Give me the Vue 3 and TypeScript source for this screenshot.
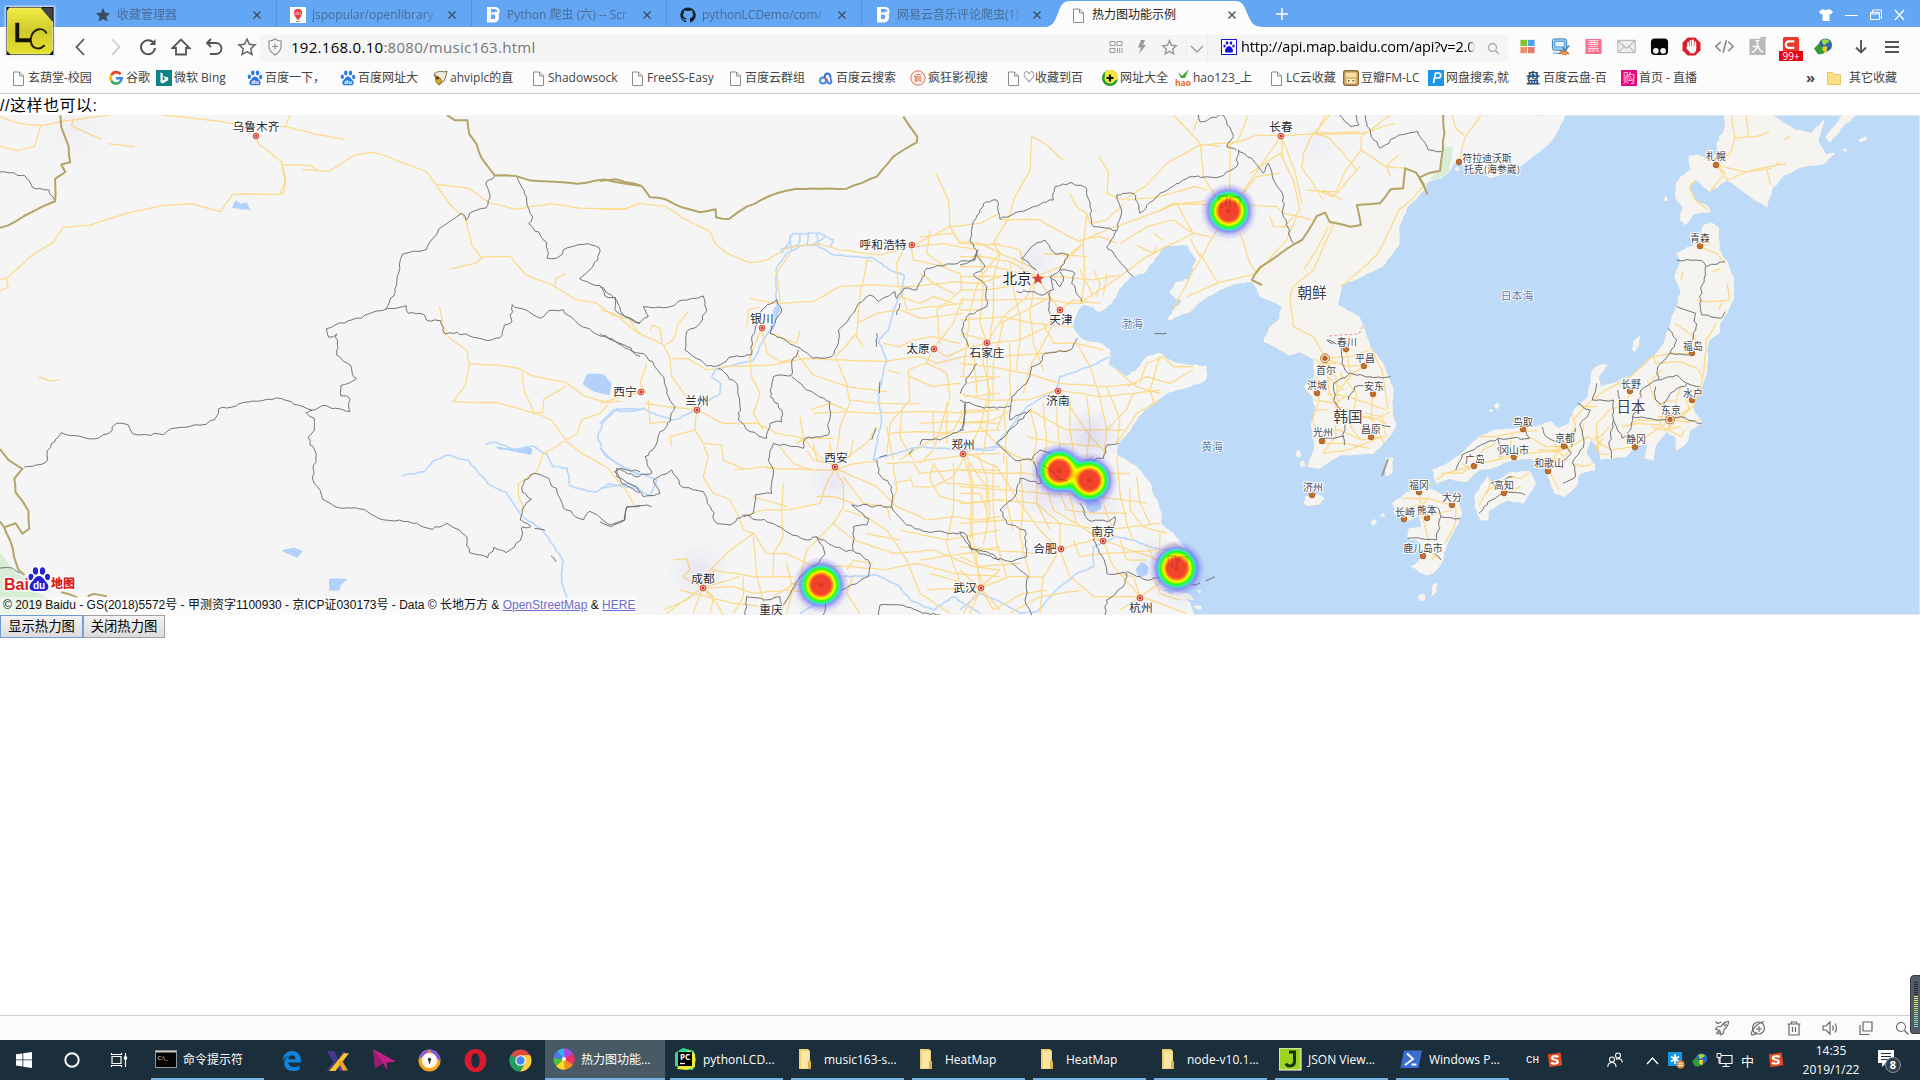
<script setup lang="ts">
type Region = 'a' | 'b' | 'c' | 'd'
type Kind = 'sea' | 'land' | 'warm' | 'green' | 'lake' | 'river' | 'road' | 'province' | 'nation' | 'dash'

// Each map sheet has its own survey grid; the transform places it on the shared canvas.
const sheets: Record<Region, string> = {
  a: 'translate(0 110) scale(.40816 .3444)',
  b: 'translate(600 110) scale(.33333)',
  c: 'translate(960 110) scale(.33333)',
  d: 'translate(1260 110) scale(.42088 .33333)',
}

const layers: { kind: Kind; sheet: Region; lines: string[] }[] = [
  { kind: 'sea', sheet: 'c', lines: [
    '875,515 820,520 770,545 720,575 690,605 625,630 640,600 665,575 630,550 645,520 685,510 710,450 680,405 620,405 590,440 550,490 510,500 475,540 455,580 415,605 400,590 365,585 345,620 338,650 350,670 370,690 430,705 450,720 445,765 500,800 540,770 560,740 600,730 650,760 740,770 735,810 690,830 620,850 570,885 540,915 500,970 475,1000 470,1035 530,1070 570,1120 600,1200 605,1245 640,1270 680,1320 705,1385 690,1430 600,1440 650,1455 690,1480 700,1515 2880,1515 2880,15 1000,15'] },
  { kind: 'land', sheet: 'd', lines: [
    '725,15 705,70 680,110 625,165 550,205 520,180 480,165 460,160 450,185 430,205 400,215 390,240 350,290 330,350 330,405 290,470 240,500 195,525 185,585 100,620 0,560 -20,515 -20,15'] },
  { kind: 'warm', sheet: 'd', lines: [
    '390,205 390,240 350,290 330,350 330,405 290,470 240,500 195,525 183,585 235,620 262,710 295,770 315,830 314,900 322,950 300,990 270,1030 190,1035 140,1075 115,1070 130,1010 122,950 132,900 125,860 105,830 130,800 128,745 95,725 70,735 10,695 20,660 45,630 55,570 35,545 0,540 -20,515 0,472 65,415 100,390 135,318 155,308 165,335 215,350 240,345 230,285 285,280 310,240 330,240 345,175',
    '1105,15 1103,60 1085,100 1085,130 1065,150 1040,135 1020,140 1025,180 1000,200 988,225 990,270 1005,290 998,330 1010,345 1030,310 1070,305 1065,290 1030,270 1020,230 1035,210 1070,245 1110,210 1160,255 1205,290 1215,240 1245,195 1290,170 1340,160 1365,130 1345,135 1325,95 1340,30 1310,70 1270,60 1220,15',
    '1355,95 1345,80 1370,40 1385,15 1415,15 1385,50',
    '1055,345 1070,338 1090,355 1090,420 1110,455 1125,510 1125,560 1110,610 1092,640 1090,670 1065,690 1062,780 1050,830 1030,870 1030,900 1050,940 1020,960 1015,995 990,1020 988,980 965,965 940,1005 935,1050 915,1045 920,1000 890,1010 870,1040 810,1048 805,1010 785,990 775,1030 795,1065 795,1080 760,1090 750,1130 725,1160 700,1150 685,1100 690,1070 670,1050 640,1045 600,1050 560,1070 520,1080 490,1115 450,1105 420,1120 410,1080 440,1065 480,1030 520,980 560,960 620,955 660,950 690,935 710,955 735,940 745,900 780,860 790,780 810,765 825,765 805,800 808,830 840,820 880,800 920,760 960,700 975,640 990,590 1000,540 985,500 1000,450 990,430 1025,410 1045,400 1050,360',
    '510,1160 540,1100 555,1130 590,1090 640,1085 655,1120 625,1180 590,1170 545,1200 540,1230 525,1230 510,1190',
    '315,1180 345,1150 380,1130 410,1140 440,1160 470,1170 480,1210 465,1250 445,1300 430,1360 410,1390 395,1395 360,1370 385,1345 385,1310 375,1290 350,1285 355,1255 385,1250 380,1215 345,1235 320,1210',
    '885,718 890,690 903,678 900,705 890,725', '105,1180 108,1160 140,1155 152,1165 140,1183 112,1187',
    '300,1045 316,1045 312,1090 300,1098', '408,1458 412,1425 421,1420 418,1445', '376,1458 390,1452 390,1470 380,1472',
    '1423,90 1440,80 1440,88 1428,96', '960,270 965,260 967,272', '1385,120 1392,116 1393,124', '557,886 563,878 569,888 562,896', '545,902 551,898 551,905',
    '264,1240 270,1228 277,1235 270,1246', '286,1218 293,1210 296,1218', '85,1030 92,1020 98,1035 90,1042', '95,1060 102,1052 108,1066 99,1072', '463,178 469,170 472,182'] },
  { kind: 'green', sheet: 'd', lines: ['437,110 458,112 455,150 448,185 425,205 400,208 428,182 436,140'] },
  { kind: 'green', sheet: 'a', lines: ['0,1285 12,1300 32,1340 60,1360 90,1400 150,1440 150,1465 0,1465'] },
  { kind: 'lake', sheet: 'a', lines: [
    '568,285 578,262 590,272 605,268 614,290 590,288', '1428,795 1440,765 1480,768 1498,795 1495,828 1455,818',
    '690,1280 720,1270 742,1280 728,1300 712,1292', '806,1365 808,1360 852,1362 835,1380 832,1395 806,1395',
    '1215,978 1270,985 1290,975 1305,985 1300,1002 1265,992 1220,984'] },
  { kind: 'lake', sheet: 'b', lines: ['520,600 535,580 540,600 520,660 508,670'] },
  { kind: 'lake', sheet: 'c', lines: ['528,1375 545,1355 565,1370 562,1395 540,1402 530,1390', '375,1175 395,1160 425,1175 425,1195 395,1210 380,1195'] },
  { kind: 'warm', sheet: 'c', lines: ['640,1445 690,1455 700,1470 660,1465', '712,1440 722,1442 720,1450', '700,1490 722,1488 724,1498'] },
  { kind: 'river', sheet: 'a', lines: [
    '985,1062 1040,1050 1060,1020 1095,1002 1150,1020 1195,1085 1240,1110 1280,1180 1330,1220 1380,1310 1375,1370 1388,1410 1390,1465',
    '1190,970 1215,965 1260,985 1305,975 1340,1000 1355,1035 1390,1040 1395,1090 1420,1100 1460,1110 1490,1085 1568,1100',
    '1568,870 1510,868 1475,910 1465,950 1480,1000 1530,1040 1568,1060'] },
  { kind: 'river', sheet: 'b', lines: [
    '0,940 40,900 90,905 130,895 160,910 215,930 240,925 300,890 360,850 362,820 335,800 345,780 400,765 460,750 485,700 510,660 530,600 528,480 560,430 600,408 650,405 700,435 760,440 820,445 870,480 912,495 905,550 880,600 865,660 835,690 860,750 835,850 845,930 820,1050 870,1035 960,1010 1080,1020 1200,1010',
    '545,430 580,370 660,370 700,390 690,410', '570,375 575,420', '600,370 595,410', '625,370 620,405', '650,372 655,400', '540,420 590,405', '675,380 640,405',
    '0,1015 50,1060 90,1080 170,1110 150,1160 90,1120 0,1135', '730,1400 830,1395 900,1430 930,1470 1000,1500 1060,1460 1140,1510', '600,1510 650,1480 720,1440'] },
  { kind: 'river', sheet: 'c', lines: [
    '450,740 390,770 300,800 290,840 200,890 110,1005 100,1020 0,1020', '0,1500 60,1450 110,1470 180,1510 230,1505 300,1430 350,1390 400,1370 400,1310 470,1280 520,1290 570,1310 640,1325'] },
  { kind: 'road', sheet: 'a', lines: [
    '0,20 45,38 100,45 170,30 270,15', '100,45 85,105 45,118 0,105', '180,25 175,45 215,68 250,85', '265,98 330,107',
    '395,15 480,25 620,45 700,48 770,70 845,85', '700,45 710,15', '627,80 635,100 690,150 698,210 685,245 570,245 540,295 470,272 395,278 310,300 220,335 155,340 130,385 75,425 15,490 20,515 0,525', '15,490 0,490', '692,160 700,205 695,240 685,245',
    '695,158 765,162 775,175 740,174', '770,175 805,178 870,130 915,123 960,140 1045,180 1070,220 1100,270 1142,320 1155,390 1180,430 1165,445 1105,462',
    '1070,215 1150,228 1200,270 1260,288 1350,272 1420,285 1530,288 1568,270', '1180,427 1250,425 1290,480 1360,513 1410,550 1460,560 1500,595 1540,605 1568,650', '1360,510 1362,490 1385,475',
    '1077,570 1090,650 1145,700 1150,740 1140,800 1110,847 1220,850 1310,880 1350,900 1390,965 1430,1000 1490,1040 1525,1090 1555,1150',
    '1150,738 1215,740 1270,750 1300,770 1385,790 1430,830 1490,850 1520,845', '1280,765 1285,820 1308,880 1330,878 1332,840 1388,800', '1490,855 1470,880 1425,900 1415,940 1330,1000 1315,1050 1270,1085 1270,1120 1285,1165', '95,775 125,787 145,783'] },
  { kind: 'road', sheet: 'b', lines: [
    '0,298 80,295 120,280 195,288 250,325 330,365 345,400 380,430 450,458 500,450 560,415 650,400 720,420 840,435 930,410 990,380 1050,350 1140,340 1200,310', '1008,190 1045,270 1050,350 1080,400 1120,405 1200,402',
    '0,600 50,615 100,660 190,705 210,745 215,800 250,850 290,900 370,940 470,940 530,970 610,985 660,1040 705,1070', '265,605 235,640 220,690 195,705', '150,660 160,645 180,655 185,700',
    '215,745 260,745 320,780 400,768 520,765 620,745 700,750 850,755 960,740 1010,760 1090,740 1200,735', '530,580 640,575 720,530 800,525 930,530 1060,515 1140,520 1200,500',
    '450,565 530,580 540,570 530,490 570,430', '485,655 500,730 540,755 580,748', '485,655 450,740 455,800 480,850 460,910 490,960', '440,650 445,600 480,590', '510,670 590,700 600,660',
    '590,730 640,795 740,830 860,845', '705,740 740,820 750,880 720,950 705,1070', '770,670 705,740', '800,450 780,560 770,680 790,710', '800,450 815,455', '910,420 890,460 895,530', '930,400 940,450 1010,465 1080,490 1085,540 1010,600 1020,700',
    '770,640 830,610 900,600 960,625 1090,610', '850,700 900,710 940,690 1000,680 1080,700', '1000,715 980,760 1040,790 1050,860 1020,960 1000,1020 960,1060', '980,760 925,780 930,870 870,940 860,1030', '640,910 740,905 830,910 960,905 1090,910 1200,900', '600,920 610,985 590,1000 620,985 700,985',
    '960,940 1030,935 1200,940', '870,970 950,965 1040,970 1200,960', '860,1060 960,1055 1090,1035 1200,1030', '500,1075 700,1080 770,1060 830,1055', '400,1080 500,1070 530,1075', '290,905 285,960 210,980 215,1010', '285,960 310,1000 365,1005 370,1050 430,1075', '310,1005 325,1040 310,1100 340,1150 390,1170 420,1230 430,1260',
    '135,880 200,890 290,900', '145,870 150,940 200,935', '140,760 120,820 140,850', '0,880 60,860 123,848',
    '705,1075 680,1120 660,1180 560,1200 490,1200 430,1220', '550,1120 545,1200 550,1280 520,1330 520,1400', '460,1160 560,1190', '705,1075 730,1120 730,1190 700,1240 620,1320', '705,1075 830,1130 890,1190 980,1230 1060,1220 1130,1230 1200,1220', '640,1000 650,1050 700,1060', '700,1070 750,1040 760,990', '715,1060 800,1000 830,950', '540,1010 580,1060 640,1080',
    '430,1260 460,1270 500,1330 560,1330 640,1370 760,1370 850,1380 950,1360 1060,1390 1200,1400', '460,1270 380,1330 310,1400 308,1435', '460,1280 470,1400 500,1510', '220,1350 260,1345 270,1380 250,1400 308,1434', '308,1434 260,1470 190,1500', '308,1434 400,1430 460,1450 560,1440 640,1450', '308,1434 280,1510', '308,1434 350,1480 370,1515', '308,1434 330,1390 350,1380', '240,1440 400,1480 480,1490', '340,1380 460,1400 580,1400', '700,1240 760,1290 880,1330 1000,1320 1120,1370 1200,1380', '620,1320 600,1400 540,1510', '730,1200 800,1220 860,1260 920,1350 960,1450 1050,1510',
    '930,1100 940,1130 1000,1130 1060,1100 1100,1030', '1000,1060 990,1110 1020,1160 1100,1180 1200,1170', '1090,1035 1110,1100 1120,1200 1110,1300 1150,1430', '880,1060 890,1140 870,1200', '1000,1060 1040,1120 1200,1130', '1060,1060 1060,1200 1040,1300 1080,1420', '900,1260 1040,1290 1200,1260', '960,1350 1100,1330 1200,1310', '980,1440 1140,1432', '800,1270 900,1290', '900,530 920,600 1090,580', '1090,910 1060,960 1010,980 900,1050', '860,950 880,1050', '905,900 900,980 940,1050', '990,360 980,430 1040,470', '950,410 1030,400 1130,420', '960,380 1060,370 1080,400', '740,900 690,880 630,900', '750,870 850,880 960,880', '690,1000 695,1070', '930,800 1000,830 1080,820', '900,790 860,780', '740,1380 760,1350 820,1360', '790,1180 860,1190 870,1230', '650,1160 700,1160 760,1180',
    '1000,715 1060,640 1090,560', '1000,715 1040,740 1090,720', '960,490 1000,520 1060,550', '900,560 960,580 1000,560 1060,580', '1150,690 1150,760 1170,850 1160,960 1150,1030', '1090,860 1200,850', '1100,820 1200,800', '1130,1030 1160,1100 1170,1200 1150,1300', '940,1060 960,1090 1000,1085 1080,1080 1200,1080', '1080,1150 1140,1150 1160,1200', '1140,1432 1060,1410 990,1390', '1140,1432 1200,1380', '1140,1432 1180,1500', '1140,1432 1090,1510', '200,1510 240,1480 308,1434 420,1400', '330,1510 340,1460 308,1434', '400,1510 430,1460 430,1400', '520,1460 580,1420 640,1430', '560,1360 580,1440 560,1510', '760,1400 740,1450 780,1510', '730,1100 760,1140 790,1180', '690,1060 640,1050 620,1020', '880,1120 930,1110', '1000,900 1000,1000', '1040,880 1040,1000'] },
  { kind: 'road', sheet: 'c', lines: [
    '215,80 210,180 165,260 145,325 100,400 120,430', '215,80 260,105 310,150', '415,140 445,185 440,250 490,270 555,230 620,160 720,105 840,95 890,75 963,78', '120,328 240,330 310,370 360,395 440,360 540,325 640,285 740,270', '640,15 720,100 730,200 770,265', '865,15 835,90 800,110', '810,100 810,240', '963,78 900,170 840,260 760,380 690,500 640,600', '963,78 1060,70 1200,65', '963,78 970,150 1000,210 1020,300 970,350', '963,78 1000,170 1025,280', '1060,70 1110,85 1190,180', '1060,70 1030,130 1025,170 1070,240 1120,260 1200,170', '1060,70 1110,15', '870,190 900,170 960,130 1000,210', '870,285 950,290 970,310 1020,320 1060,330', '840,370 870,460 890,490', '1010,320 980,390 890,490 770,520 680,560', '700,370 560,440 480,500 360,580', '750,380 700,370 650,280', '740,240 700,230 600,260 500,270', '490,280 440,330 390,340 380,310 350,290', '380,310 370,400 375,500 365,580', '530,405 580,430 590,410', '610,390 580,370', '850,250 890,200 960,190', '720,430 750,480 770,515', '690,385 720,440', '760,285 640,280 600,300', '1105,350 1070,420 1030,480',
    '0,395 60,400 120,430 190,460 230,480', '0,440 70,440 150,455 230,500', '0,500 100,500 170,495 230,500', '230,500 300,470 370,400', '230,500 310,500 400,510 480,495', '230,500 270,560 300,600', '230,500 200,560 130,620 80,700', '0,570 120,570 240,565 330,580 370,580', '80,700 85,850 60,950 20,1030', '80,700 180,690 260,650 300,600', '0,630 130,620 220,640 340,650', '120,430 100,510 100,600 90,690', '80,700 0,720', '90,770 200,790 300,820 440,830 530,820', '300,600 250,700 210,770 190,850', '293,840 200,870 80,870 0,850', '293,840 420,860 520,850 600,840', '293,840 290,930 300,1010 290,1060', '293,840 350,920 400,990 440,1030', '350,700 390,770 420,860 440,960 430,1040', '210,900 320,960 440,960 490,960', '440,830 480,930 470,1000', '470,780 530,830 600,850', '540,820 560,760 610,740 640,770 700,770', '500,830 560,800 630,820 700,780', '600,740 570,840 580,880', '0,760 90,770', '0,800 100,800', '0,940 100,930 150,900', '0,905 80,900', '60,950 110,1000 170,1040 240,1060', '100,870 100,760 130,640', '130,900 140,980 130,1060', '0,1080 100,1090 200,1090 250,1100 400,1090 510,1090', '0,1130 150,1140 250,1150 420,1160 560,1180', '0,1180 120,1170 230,1180 300,1240 300,1320', '0,1240 130,1230 300,1240 430,1260 600,1240', '20,1030 40,1130 30,1230 50,1350 60,1430', '20,1030 110,1070 180,1180 240,1260 300,1320', '100,1060 100,1200 110,1300 140,1400', '180,1050 190,1180 180,1280 210,1400', '470,1040 480,1150 500,1240 520,1290', '510,1130 510,1200 550,1250 620,1270', '300,1317 220,1330 100,1320 0,1310', '300,1317 250,1400 240,1510', '300,1317 330,1400 400,1460 540,1460', '300,1317 400,1290 430,1290 540,1330 620,1360', '430,1290 460,1370 540,1460', '540,1460 600,1420 590,1370', '540,1460 600,1480 680,1510', '540,1460 480,1500', '60,1433 150,1400 250,1400', '60,1433 120,1500', '60,1433 30,1510', '0,1380 60,1433', '150,1510 240,1460 370,1440', '330,1160 350,1240 420,1290', '260,1130 280,1200 350,1240', '590,1330 640,1300 690,1330', '440,1330 590,1320', '400,1040 380,1050', '0,670 80,690', '360,480 400,560', '400,480 420,520 410,560', '440,490 430,560', '360,390 420,380 470,400', '320,440 370,400', '250,430 380,440', '0,1340 60,1370 180,1360',
    '120,430 60,500 30,600 20,700 10,800', '60,430 70,540 60,640 80,700', '150,455 160,540 180,620 180,690 170,780', '230,500 210,600 220,700 250,780', '270,560 200,600 120,640', '300,600 340,570 420,580', '190,460 180,420 100,400', '150,700 150,860 110,960', '40,700 50,850', '250,640 280,700 350,700 430,720', '120,740 250,730 330,720', '30,1060 80,1130 80,1240', '140,1040 140,1180 160,1260', '230,1060 230,1180 270,1260', '210,900 230,980 220,1060', '250,880 260,1000 250,1050', '380,860 390,950 380,1040', '330,860 330,960 340,1020', '200,980 300,1000 420,1010', '520,850 500,900 440,960', '530,1100 540,1180 570,1240', '440,1100 430,1180 460,1260', '300,1150 320,1200 420,1210 500,1210', '340,1290 360,1340 440,1330', '480,1290 500,1350 560,1350', '600,1270 600,1330', '560,1300 580,1350', '540,1460 520,1400 470,1390', '540,1460 560,1500', '580,1400 600,1450 660,1470', '0,470 100,470 180,490', '0,540 60,540 150,530', '0,600 60,600', '100,1500 190,1450 260,1440', '480,400 560,350 640,330 700,370', '350,290 330,250', '780,110 740,105', '720,15 700,60', '1070,240 1090,270', '930,320 940,350 1000,350',
    '1120,345 1060,480 1000,530 990,560 1000,650 1060,680 1097,745', '470,1000 530,910 600,870'] },
  { kind: 'road', sheet: 'd', lines: [
    '525,15 490,75 480,110 474,155', '455,15 465,55 485,75', '395,220 350,280 330,300 300,380 280,430 240,480 190,530', '165,340 200,345', '134,75 240,70 320,40', '134,75 155,15', '240,120 200,190 180,245 110,240', '240,120 300,170 350,175', '240,120 240,80 310,15', '150,240 195,270', '310,200 300,170 330,135',
    '155,745 165,850 185,900 260,960 265,990', '155,745 210,770 245,765', '155,745 135,800 140,870 125,930 150,1000', '160,850 210,860 300,900', '180,880 180,980 150,1030', '160,900 130,900', '185,890 270,930 310,905', '155,745 215,740 260,720', '268,850 265,930 295,1000', '140,960 190,960 240,990 300,980', '190,790 230,850 215,950 240,990', '150,1030 210,1020 290,980', '245,770 210,800', '130,745 140,760 180,760', '205,720 215,800 170,870', '300,980 290,920 250,910', '130,870 180,880 200,860', '160,800 200,840', '140,1000 200,1000 260,1015', '150,760 180,800 185,890', '220,930 260,920 300,940', '262,710 290,780 305,900',
    '1085,165 1110,210 1170,180 1250,160', '1085,165 1120,125 1128,85 1180,80 1210,65', '1128,85 1120,15', '1085,165 1105,190 1070,245', '1205,180 1212,225', '1220,170 1235,155', '1245,90 1260,80', '1155,15 1160,80', '1035,210 1020,230 1035,270 1065,300', '1085,165 1150,185 1215,175',
    '1045,410 1085,430 1105,460', '1045,410 1070,400', '1110,520 1115,570 1060,575 1035,570', '1100,570 1090,600', '1005,485 1000,510', '1075,485 1095,475', '1085,640 1060,690 1055,780 1045,840 1030,890 975,930', '1020,670 1035,690 1028,730 975,730 930,740 880,800 810,850 780,880 745,930', '935,740 940,760 1000,755 1040,775 1050,800', '985,640 1020,670', '920,810 935,860 975,930', '975,930 1020,935 1045,930', '975,930 940,960 890,1010 835,1020 805,1000 780,980 720,1020 640,1030 600,1040 510,1065 440,1090 420,1110', '880,840 870,880 830,900 800,940 800,990', '880,840 850,820', '975,930 970,960 1000,980 1010,960', '975,930 900,930 870,950', '1000,830 975,930', '1010,860 1020,900 990,930', '740,910 750,950 720,1010 700,1040 690,1090 710,1140', '520,980 560,980 620,965 660,960', '600,970 590,1040', '560,1000 530,1020 510,1065', '770,940 765,980', '760,890 800,890', '740,1060 770,1070 790,1060', '830,950 800,990', '860,950 900,940 950,945', '950,880 985,870', '955,780 930,810', '640,980 680,1010 720,1010', '660,1020 720,1020', '690,1045 730,1050', '800,970 805,1030 830,1035', '960,900 950,940 965,960 985,940', '945,920 1000,915 1015,940', '930,950 960,960 1000,950', '700,1000 720,1040 740,1020 715,1010 700,1030', '795,980 810,1000 795,1015 815,985', '560,1050 600,1030 640,1015', '480,1060 500,1080',
    '378,1145 385,1220 400,1290 395,1320 430,1350', '340,1165 400,1165 457,1185', '325,1195 385,1185 400,1165', '465,1190 465,1240 440,1300', '410,1120 380,1140', '400,1220 455,1200', '335,1210 342,1228', '420,1300 410,1350', '590,1100 620,1105 640,1090', '520,1190 540,1140 590,1110', '580,1150 620,1130', '550,1110 540,1150', '430,1090 480,1090 500,1070'] },
  { kind: 'province', sheet: 'a', lines: [
    '1212,190 1190,215 1200,245 1190,285 1150,300 1142,320 1130,300 1075,345 1045,405 987,418 965,540 945,578 820,625 800,635 805,660 825,650 825,712 858,740 873,780 835,800 835,830 855,835 858,875 790,858 765,872 750,880 770,895 770,930 755,950 775,1000 765,1065 790,1130 830,1155 880,1158 940,1190 1000,1195 1060,1218 1095,1200 1140,1235 1150,1285 1195,1300 1210,1270 1240,1285 1275,1250 1280,1210 1300,1210',
    '765,872 690,838 620,845 535,868 525,900 490,915 420,925 400,943 325,940 315,915 285,910 265,940 230,955 150,937 125,970 110,1025 60,1037', '945,578 995,568 1000,590 1040,595 1045,610 1080,612 1090,650 1120,645 1160,660 1205,668 1230,655 1235,625 1250,620 1255,565 1325,605 1345,582 1380,580 1415,620 1460,650 1500,665 1530,690 1568,715',
    '1267,192 1305,310 1295,330 1340,385 1340,430 1365,430 1390,400 1440,388 1468,400 1465,435 1420,490 1470,510 1490,545 1508,545 1510,585 1568,620', '1300,1210 1275,1190 1285,1150 1302,1130 1280,1110 1285,1075 1310,1055 1345,1070 1365,1110 1380,1155 1430,1190 1445,1165 1495,1205 1530,1190 1535,1155 1568,1150', '1568,1110 1525,1085 1505,1050 1520,1040 1568,1050', '1350,1295 1362,1312', '0,1330 30,1330 50,1345', '1310,1215 1335,1220', '0,180 60,190 80,225 120,232 133,262'] },
  { kind: 'province', sheet: 'b', lines: [
    '0,530 50,570 70,615 115,640 145,620 130,590 210,590 250,570 310,558 320,600 300,640 260,665 255,720 320,768 350,768 400,740 455,735 455,690 485,600 530,568 545,600 510,670 590,710 640,745 695,740 715,700 715,660 745,630 775,580 810,555 835,575 885,545 890,565 912,535 950,540 980,475 1050,462 1120,450 1135,420',
    '0,670 60,700 140,740 190,800 200,850 225,890 200,950 180,965 165,1010 135,1040 155,1090 105,1100 50,1075 50,1100 110,1130 130,1160 180,1150 160,1110 215,1080 245,1130 310,1145 335,1200 345,1235 390,1245 430,1215 500,1235 570,1270 620,1290 650,1280 730,1320 780,1330 810,1360 805,1400 725,1440', '0,1235 35,1250 75,1230 80,1190 140,1185 155,1190',
    '595,720 575,755 575,795 520,800 510,860 545,900 545,935 510,940 500,985 450,965 415,930 420,890 410,820 355,775', '575,800 620,840 690,875 685,975 615,985 610,1015 520,1000 505,1050 520,1080 515,1150 465,1155 460,1210 430,1220', '650,1280 675,1330 650,1365 600,1400 560,1470 530,1500', '830,1050 835,1090 875,1130 875,1190 920,1245 980,1265 1095,1270 1115,1320 1160,1325 1200,1350', '875,1190 755,1185 805,1225 800,1245 760,1250 760,1320', '1095,880 1090,960 1020,990 965,990 960,1005', '435,1515 440,1460 490,1470 540,1460 545,1500', '835,1515 840,1485 900,1485 960,1505 1020,1515', '675,1480 670,1515', '900,580 890,615', '830,670 828,710', '840,815 838,850', '828,955 815,990', '862,1035 838,1042', '940,1018 928,1033'] },
  { kind: 'province', sheet: 'c', lines: [
    '0,465 45,450 50,420 30,395 40,335 80,275 110,270 120,328 220,290 280,270 285,230 330,218 380,235 390,290 400,350 470,362 440,410 520,500', '470,362 485,300 470,255 520,250 540,310 600,250 690,200 780,200 830,170 835,120 880,150 910,190 925,160 940,210 970,260 970,320 1000,400', '830,120 800,110 820,80 790,15 720,35 715,15', '50,430 75,470 40,495 80,530 80,590 20,620 5,660 25,710',
    '230,480 185,445 215,410 255,390 285,430 325,435 300,480 270,500 280,540 250,555 215,545 170,545', '300,480 345,490 335,520 365,575', '270,500 300,530 310,500 300,485', '270,545 265,600 275,640', '352,685 330,720 255,730 240,760 215,770 200,820 155,860 150,930 210,900 110,1000 165,1050 215,1050 240,1020 290,1030 300,1075 390,1050 430,1045 440,1005 475,1000', '0,870 60,890 110,895 150,890', '50,760 25,800 0,850', '220,1055 230,1085 245,1120 180,1105 170,1150 120,1200 140,1240 195,1260 200,1340 155,1355 100,1345 30,1315 0,1265', '360,1180 385,1230 440,1235 465,1220 460,1250 410,1260 400,1290 435,1360 440,1390 500,1390 490,1430 440,1470 435,1515', '155,1360 205,1400 195,1470 215,1515', '500,1385 540,1400 560,1410 600,1400', '695,1425 720,1418', '738,1412 765,1400', '583,672 620,670', '15,880 10,950 0,960', '1100,690 1120,700'] },
  { kind: 'province', sheet: 'd', lines: [
    '190,15 215,50 235,45 228,15', '250,15 255,50 285,115 330,75 375,65 400,120 433,125', '160,690 190,705 195,760 210,790 260,800 310,800', '210,795 175,820 180,880 200,920 200,1005', '210,870 225,830 270,830', '200,980 150,985', '310,950 285,945', '990,450 1050,452 1060,470 1105,455', '1058,470 1045,580 1050,615 1095,625 1105,605', '990,590 1035,610 1035,660 1028,690', '970,655 990,690 975,730 945,770 945,810 905,840 900,890 885,920', '945,810 990,795 1015,820 1045,830', '1015,820 975,850 960,890 940,870 940,830', '800,820 790,870 840,870 840,930 860,985 880,960 885,920 940,930 1000,920 1050,940', '755,880 785,900 760,945 770,1000 745,1050 750,1100 720,1120', '630,955 640,985 565,985 525,1005 480,1035 465,1080', '670,950 680,980 720,1000 740,1030 710,1060', '565,985 570,1040', '840,930 830,1010 835,1045', '550,1120 580,1110 600,1100', '520,1210 550,1170 580,1140 630,1155', '380,1190 420,1190 430,1220 475,1225', '430,1220 420,1290 350,1285', '850,840 855,870', '750,955 740,1010', '415,1330 430,1350', '975,730 1020,735'] },
  { kind: 'nation', sheet: 'a', lines: [
    '148,15 150,50 168,105 172,152 150,158 160,180 135,200 135,265 80,295 20,335 0,342', '1095,15 1115,30 1145,30 1150,70 1168,100 1180,140 1212,190 1265,192 1300,205 1415,214 1480,202 1568,220', '0,985 20,1015 55,1042 35,1070 38,1110 70,1165 72,1215 55,1230 38,1200 10,1212 25,1250 35,1300 45,1335 60,1350', '215,1412 230,1405 262,1412', '150,1400 190,1415', '0,1195 10,1212'] },
  { kind: 'nation', sheet: 'b', lines: ['0,212 50,208 125,228 150,262 195,267 245,292 300,307 347,298 348,322 387,327 440,290 530,250 590,236 660,236 740,236 830,200 880,140 910,120 950,97 952,80 930,50 910,20'] },
  { kind: 'nation', sheet: 'd', lines: ['435,15 438,70 432,140 428,182 400,190 378,203 398,253', '390,225 370,187 345,175 340,235 310,238 285,280 230,285 240,345 215,350 165,335 155,308 135,318 100,390 65,415 0,472 -20,512', '-20,510 5,525'] },
  { kind: 'dash', sheet: 'd', lines: ['165,678 190,675 235,672 243,650'] },
]

const wobble: Record<Kind, number> = { sea: 2.4, land: 1.8, warm: 1.6, green: 0, lake: 1, river: 1.6, road: 1, province: 2.8, nation: 1.2, dash: 0 }
const closed: Kind[] = ['sea', 'land', 'warm', 'green', 'lake']

let seed = 77
function rnd(): number {
  seed = (seed * 16807) % 2147483647
  return seed / 2147483647 - 0.5
}

// Breaks long segments into short ones so that coasts and borders look natural.
function trace(line: string, kind: Kind): string {
  const pts = line.trim().split(' ').map((p) => p.split(',').map(Number))
  if (closed.includes(kind)) pts.push(pts[0])
  const amp = wobble[kind] * 2.6
  const step = kind === 'road' || kind === 'nation' ? 26 : 11
  const out: string[] = []
  for (let i = 0; i < pts.length - 1; i++) {
    const [x1, y1] = pts[i]
    const [x2, y2] = pts[i + 1]
    const len = Math.hypot(x2 - x1, y2 - y1)
    const n = len > 900 ? 1 : Math.max(1, Math.round(len / step))
    for (let k = 0; k < n; k++) {
      const t = k / n
      const j = k ? amp : 0
      out.push((x1 + (x2 - x1) * t + rnd() * j).toFixed(1) + ',' + (y1 + (y2 - y1) * t + rnd() * j).toFixed(1))
    }
  }
  const last = pts[pts.length - 1]
  out.push(last[0] + ',' + last[1])
  return 'M' + out.join('L') + (closed.includes(kind) ? 'Z' : '')
}
const drawn = layers.map((l) => ({ kind: l.kind, t: sheets[l.sheet], d: l.lines.map((s) => trace(s, l.kind)).join('') }))

type Label = [text: string, x: number, y: number, style: string, dotX?: number, dotY?: number]
const labels: Label[] = [
  ['乌鲁木齐', 256, 126.5, 'cn', 256, 136], ['西宁', 625, 392, 'cn', 641, 392], ['兰州', 697, 401, 'cn', 697, 410], ['银川', 762, 318.5, 'cn', 762, 328],
  ['呼和浩特', 883, 245, 'cn', 912, 245], ['太原', 918, 349, 'cn', 934, 349], ['石家庄', 987, 353, 'cn', 987, 343], ['郑州', 963, 445, 'cn', 963, 454],
  ['西安', 836, 458, 'cn', 835, 467], ['成都', 703, 579, 'cn', 703, 588], ['重庆', 771, 610, 'cn'], ['武汉', 965, 588, 'cn', 981, 588],
  ['北京', 1017, 279, 'capital'], ['天津', 1061, 320, 'cn', 1060, 310], ['济南', 1058, 400.5, 'cn', 1058, 391], ['南京', 1103, 532, 'cn', 1103, 541],
  ['合肥', 1045, 549, 'cn', 1061, 549], ['杭州', 1141, 607.5, 'cn', 1140, 598], ['长春', 1281, 127, 'cn', 1281, 136],
  ['渤海', 1132, 324, 'water'], ['黄海', 1212, 447, 'water'], ['日本海', 1517, 296, 'water'],
  ['朝鲜', 1312, 292.5, 'state'], ['韩国', 1348, 416.5, 'state'], ['日本', 1631, 406.5, 'state'],
  ['春川', 1347, 342, 'for', 1346, 349], ['首尔', 1326, 370, 'for'], ['洪城', 1317, 385, 'for', 1317, 393], ['光州', 1323, 432.5, 'for', 1322, 441],
  ['济州', 1313, 487.5, 'for', 1312, 495], ['平昌', 1365, 358.5, 'for', 1364, 366], ['安东', 1374, 386, 'for', 1373, 394], ['昌原', 1371, 429, 'for', 1371, 437],
  ['符拉迪沃斯', 1487, 158, 'for', 1459, 162], ['托克(海参崴)', 1492, 169, 'for'], ['札幌', 1716, 156.5, 'for', 1716, 165], ['青森', 1700, 238.5, 'for', 1700, 246],
  ['福岛', 1693, 346, 'for', 1692, 353], ['长野', 1631, 384, 'for', 1630, 391], ['水户', 1693, 393, 'for', 1692, 400], ['东京', 1671, 410.5, 'for'],
  ['静冈', 1636, 439, 'for', 1635, 447], ['京都', 1565, 438, 'for', 1564, 446], ['鸟取', 1523, 422, 'for', 1523, 429], ['冈山市', 1514, 450, 'for', 1514, 457],
  ['广岛', 1475, 459, 'for', 1474, 466], ['和歌山', 1549, 463, 'for', 1548, 471], ['高知', 1504, 485.5, 'for', 1504, 493], ['福冈', 1419, 485, 'for', 1419, 492],
  ['大分', 1452, 497.5, 'for', 1452, 505], ['长崎', 1405, 512, 'for', 1404, 519], ['熊本', 1427, 510, 'for', 1427, 518], ['鹿儿岛市', 1423, 548.5, 'for', 1423, 556],
]
const seats = [[1325, 358.3], [1670, 419.5]]
const heat = [[821, 585], [1228.7, 211], [1059.3, 470.7], [1089.3, 480.3], [1176.7, 568.3]]
const haze: [number, number, number, number][] = [[1090, 438, 30, 1], [698, 572, 32, .6], [832, 482, 26, .5], [1318, 145, 24, .25], [75, 130, 34, .25], [1035, 262, 24, .4], [1155, 560, 26, .4], [945, 358, 24, .25], [1050, 485, 36, .9], [1092, 495, 32, .9], [1180, 578, 34, .9], [821, 590, 34, .8], [1229, 214, 32, .8]]
const falloff = Array.from({ length: 19 }, (_, i) => {
  const r = (i / 18) * 28
  return { o: i / 18, v: i === 18 ? 0 : Math.exp((-r * r) / 148) }
})

const ico: Record<string, string> = {
  doc: '<path d="M3.500 2h6l4 4v9.500h-10z" fill="#fdfdfd" stroke="#8c8c8c" stroke-width="1"/><path d="M9.500 2v4h4" fill="none" stroke="#8c8c8c"/>',
  star: '<path d="M8 1l2.100 4.700 5.100.5-3.800 3.400 1.100 5L8 12l-4.500 2.600 1.100-5L.8 6.200l5.100-.5z" fill="#3d4d61"/>',
  pin: '<rect width="16" height="16" fill="#fff"/><path d="M8 13.500C5 9.500 4 8 4 6a4 4 0 018 0c0 2-1 3.500-4 7.500z" fill="#e8383d"/><text x="8" y="8" font-size="5" text-anchor="middle" fill="#fff">du</text><path d="M6 14.500h4" stroke="#999"/>',
  bmob: '<path d="M2 0h4v4.500h3.500c3 0 4.500 2 4.500 5.200 0 3.800-2 5.800-6 5.800H2z" fill="#fff"/><path d="M5 1h4c3 0 4.500 1 4.500 3.500 0 1.700-.8 2.800-2 3.300" fill="none" stroke="#fff" stroke-width="2.200"/><path d="M6 7.500h2.500c1.300 0 1.800.7 1.800 2.200s-.6 2.300-2 2.300H6zM6 3h2.500c1 0 1.500.5 1.500 1.300S9.500 5.500 8.500 5.500H6z" fill="#62a6f4"/>',
  git: '<path d="M8 .4a7.700 7.700 0 00-2.400 15c.4.100.5-.2.500-.4v-1.500c-2.100.5-2.600-1-2.600-1-.400-.9-.9-1.100-.9-1.100-.7-.5.100-.5.100-.5.800.100 1.200.8 1.200.8.700 1.200 1.800.9 2.300.7 0-.5.300-.9.500-1.100-1.700-.200-3.500-.9-3.500-3.800 0-.8.300-1.500.8-2.100-.1-.2-.3-1 .1-2.100 0 0 .6-.200 2.100.8a7 7 0 013.800 0c1.500-1 2.100-.8 2.100-.8.4 1.100.2 1.900.1 2.100.5.600.8 1.300.8 2.100 0 2.900-1.800 3.600-3.500 3.800.300.200.5.700.5 1.400V15c0 .2.100.5.500.4A7.700 7.700 0 008 .4z" fill="#12202e"/>',
  google: '<g fill="none" stroke-width="2.600"><path d="M12.700 4.300A5.600 5.600 0 003.300 5.100" stroke="#ea4335"/><path d="M3.300 5.100a5.600 5.600 0 000 5.800" stroke="#fbbc05"/><path d="M3.300 10.900a5.600 5.600 0 008.300 1.400" stroke="#34a853"/><path d="M8 8.200h5.700a5.500 5.500 0 01-2.100 4.100" stroke="#4285f4"/></g>',
  bing: '<rect width="16" height="16" fill="#0c8484"/><path d="M4.500 2.500l2.200.8v7.200l3-1.600-1.500-.7-.9-2.300 4.900 1.700v2.600l-5.500 3.200-2.200-1.200z" fill="#fff"/>',
  paw: '<g fill="#2a78e4"><ellipse cx="5.800" cy="3" rx="1.700" ry="2.400"/><ellipse cx="10.500" cy="3" rx="1.700" ry="2.400"/><ellipse cx="2.300" cy="6.700" rx="1.600" ry="2.200"/><ellipse cx="13.700" cy="7" rx="1.600" ry="2.200"/><path d="M8 6.500c2 0 2.600 1.800 4 3.200 1.500 1.400 2 2.500 1.600 3.900-.5 1.800-2.400 2-5.600 1.600-3.200.4-5.100.2-5.600-1.600-.4-1.400.1-2.500 1.600-3.900C5.400 8.300 6 6.500 8 6.500z"/></g><text x="8" y="14" font-size="6" text-anchor="middle" fill="#fff" font-weight="700">du</text>',
  ahv: '<path d="M2 4c3-3 8-3 10-2l3-1-1 5-2 5-5 4-2-4z" fill="#f1ece0" stroke="#84704f"/><path d="M3 5l5 3 2 3-3 4-3-3z" fill="#dba928" stroke="#70501a" stroke-width=".7"/><circle cx="5.500" cy="8" r="1.500" fill="#5d3b12"/>',
  yunso: '<g fill="none" stroke-width="2"><circle cx="5" cy="10.500" r="3" stroke="#3b8ee8"/><path d="M6.500 8c0-3 1.500-4.500 3-4.500s3.500 2 3 5" stroke="#2f68d8"/><path d="M12.500 9c1.500 2 1 4.500-1 4.500-1.500 0-2-1.500-2-3" stroke="#4b7be0"/></g><circle cx="8.500" cy="9.500" r="1.300" fill="#e74c4c"/>',
  feng: '<circle cx="8" cy="8" r="7.200" fill="#fff6f2" stroke="#e2674f" stroke-width="1"/><text x="8" y="11.200" font-size="8.500" text-anchor="middle" fill="#dc4a32">疯</text>',
  wz: '<circle cx="8" cy="8" r="8" fill="#1f9d2c"/><path d="M3 1.800A8 8 0 0016 9 8 8 0 003 1.800z" fill="#ffe23a"/><circle cx="8" cy="8" r="5.500" fill="#f7e935"/><path d="M8 4.500v7M4.500 8h7" stroke="#111" stroke-width="2.200"/>',
  hao: '<path d="M3 2l4 4 7-7-4 9H6z" fill="#3fa535"/><text x="8" y="15.500" font-size="8.500" font-weight="700" text-anchor="middle" textLength="16" lengthAdjust="spacingAndGlyphs" fill="#e9692c">hao</text>',
  douban: '<rect x=".7" y=".7" width="14.600" height="14.600" rx="2" fill="#e0bb78" stroke="#8b6a38" stroke-width="1.400"/><rect x="3" y="3" width="10" height="4" fill="#f6dfa9"/><path d="M4 9h8v4H4z" fill="#fff1cc"/><path d="M5 10h1.500v1.500H5zM9.500 10H11v1.500H9.500z" fill="#715029"/>',
  pan: '<rect width="16" height="16" fill="#1b94ea"/><path d="M5.500 13l2-9.800h3.200c3 0 3 4.800-1 4.800H7" fill="none" stroke="#fff" stroke-width="1.700"/>',
  panzi: '<text x="8" y="13.300" font-size="14" text-anchor="middle" font-weight="700" fill="#27507d">盘</text>',
  gou: '<rect width="16" height="16" fill="#e6077d"/><text x="8" y="12.500" font-size="12.500" text-anchor="middle" fill="#ffd6ec">购</text>',
  folder: '<path d="M1.500 2.500h5l1.500 2h6.500v10h-13z" fill="#fbdf84" stroke="#e7c565"/>',
}

const tabs = [
  { icon: 'star', text: '收藏管理器' }, { icon: 'pin', text: 'jspopular/openlibrary' }, { icon: 'bmob', text: 'Python 爬虫 (六) -- Scr' },
  { icon: 'git', text: 'pythonLCDemo/com/' }, { icon: 'bmob', text: '网易云音乐评论爬虫(1)' }, { icon: 'doc', text: '热力图功能示例', on: true },
]
const marks = [
  ['doc', '玄葫堂-校园', 98], ['google', '谷歌', 48], ['bing', '微软 Bing', 91], ['paw', '百度一下，', 93], ['paw', '百度网址大', 92], ['ahv', 'ahviplc的直', 98],
  ['doc', 'Shadowsock', 99], ['doc', 'FreeSS-Easy', 98], ['doc', '百度云群组', 91], ['yunso', '百度云搜索', 92], ['feng', '疯狂影视搜', 95], ['doc', '♡收藏到百', 97],
  ['wz', '网址大全', 73], ['hao', 'hao123_上', 93], ['doc', 'LC云收藏', 75], ['douban', '豆瓣FM-LC', 85], ['pan', '网盘搜索,就', 97], ['panzi', '百度云盘-百', 96], ['gou', '首页 - 直播', 181],
] as [string, string, number][]

const nav = [
  '<path d="M12 2L4.500 10l7.500 8" fill="none" stroke="#555" stroke-width="1.800"/>',
  '<path d="M7 2l7.500 8L7 18" fill="none" stroke="#ccc" stroke-width="1.800"/>',
  '<path d="M16 6.500A7 7 0 1017 11" fill="none" stroke="#555" stroke-width="2"/><path d="M17.500 2v6h-6z" fill="#555"/>',
  '<path d="M1.500 11L10 2.500l8.500 8.500H15v6.500H5V11z" fill="none" stroke="#555" stroke-width="1.800"/>',
  '<path d="M7 2L3 6l4 4M3.500 6H12a5.500 5.500 0 010 11H6" fill="none" stroke="#555" stroke-width="1.900"/>',
  '<path d="M10 2l2.400 5.300 5.700.6-4.300 3.900 1.200 5.700-5-2.900-5 2.900 1.200-5.700L1.900 7.900l5.700-.6z" fill="none" stroke="#666" stroke-width="1.500"/>',
]
const exts = [
  '<path d="M2.500 3h7v6.500h-7z" fill="#7fc62c"/><path d="M10.500 3h7v6.500h-7z" fill="#4f9fe9"/><path d="M2.500 10.500h7V17h-7z" fill="#f0906a"/><path d="M10.500 10.500h7V17h-7z" fill="#e87a76"/>',
  '<rect x="1.500" y="2" width="15" height="12" rx="2" fill="#9fd0f5" stroke="#3b7cb8"/><rect x="4" y="4.500" width="10" height="6" fill="#e0f2ff" stroke="#4c8fcb"/><path d="M2 17h7" stroke="#4c8fcb"/><path d="M9 18c0-3 2-3.500 4-2.500 2-1 5-1 5.500 2.500-2-1.500-3 .5-3 1-1-1-2-1.500-3-.5-1-1.500-2-1.500-3.500-.5z" fill="#f0a35a" stroke="#b65a1c"/><path d="M12 11l3 3 4-5" fill="none" stroke="#3b7cb8" stroke-width="1.500"/>',
  '<rect x="1.500" y="2" width="17" height="16" rx="1" fill="#f9708f"/><text x="10" y="15" font-size="13" text-anchor="middle" fill="#ffe7ee">票</text>',
  '<rect x=".8" y="3.500" width="18.400" height="13" rx="1" fill="#eee" stroke="#aaa"/><path d="M1 4l9 8 9-8M1 16.500l6.500-6.500M19 16.500L12.500 10" fill="none" stroke="#999"/>',
  '<rect x="1" y="1.500" width="18" height="17.500" rx="4" fill="#080808"/><circle cx="6.200" cy="14.500" r="3" fill="#f4f4f4"/><circle cx="13.800" cy="14.500" r="3" fill="#f4f4f4"/>',
  '<path d="M6 .5h8l5.500 5.500v8L14 19.500H6L.5 14V6z" fill="#d8202a"/><path d="M6.500 12V6M9 11V4M11.500 11V3.500M14 11.500V5.500" stroke="#fff" stroke-width="1.900" stroke-linecap="round"/><path d="M5.600 10h9.300v4l-2 3H9l-4.500-5.500z" fill="#fff"/>',
  '<path d="M6 5l-5 5 5 5M14 5l5 5-5 5M12 3.500L8.500 16.500" fill="none" stroke="#888" stroke-width="1.700"/>',
  '<rect x="1.500" y="2" width="17" height="17" fill="#b9b9b9"/><path d="M8 4h4M10 5v5c-1 3-3 5-6 6M10 8c1 4 3 7 6 8M5 10h7" fill="none" stroke="#fff" stroke-width="1.500"/><path d="M13 1h6" stroke="#777"/>',
  '<rect x="2" y="0" width="17" height="16" rx="2" fill="#e83a2b"/><path d="M14 4.500H8.500a3 3 0 000 7H14" fill="none" stroke="#fff" stroke-width="2.400"/>',
  '<circle cx="12" cy="8.500" r="7" fill="#2d66b6"/><path d="M8 4c3-3 7-1 8 0-1 3-3 2-4 4s-3 0-4-4z" fill="#9ed83a"/><path d="M0 12l6-6 1 4 6 4c-1 3-5 5-9 4z" fill="#2f9d31"/><path d="M9 10h5l-1 7-4-3z" fill="#f2cf26"/>',
]

const quick = [
  '<path d="M1.500 10.500C2 4.500 5.500 1 10.500 1c5.500 0 8.500 4 8.500 9v2H7c.2 3 2.500 4.300 5.500 4.300 2 0 3.800-.6 5.200-1.500v3.700c-1.600 1-3.700 1.500-6 1.500C6 20 3 16.700 3 12.800c0-3.500 2-6 5-7.300-3 .5-5 2.500-6.500 5zM7 8.800h6.800C13.800 6.500 12.500 5 10.500 5S7.300 6.500 7 8.800z" fill="#1183dc"/>',
  '<path d="M0 1h6.500l4.500 8L15 1l3 1-6 9 6 9h-6.500l-3-5.500L5 20H-.5L6 11.500z" fill="#443a8c"/><path d="M16 3h5L8 20H2z" fill="#f7c62c"/><path d="M11 12l3-2.500 6 10h-5z" fill="#f29d28"/>',
  '<path d="M0 -1l22 12-9 1 .5 7-4-6.500L2 17.500z" fill="#c02183"/><path d="M0 -1l10 13.500L2 17.500z" fill="#9c1a70"/>',
  '<circle cx="10" cy="10" r="10.500" fill="#f6a31c"/><path d="M10-.5A10.500 10.500 0 0120.500 10l-6-3z" fill="#7658dd"/><path d="M10-.5C3-.5 0 5 0 8l7-3z" fill="#8e5cd9"/><circle cx="10" cy="10" r="7.500" fill="#fff2d9"/><path d="M4.500 6L10 4l5.500 2c0 5-2 8-5.500 10-3.500-2-5.500-5-5.500-10z" fill="#fff"/><circle cx="10" cy="9" r="1.600" fill="#333"/><path d="M10 9v4" stroke="#333" stroke-width="1.500"/>',
  '<path d="M10-1a10.500 11 0 100 22 10.500 11 0 000-22zm0 4c2.500 0 4 3 4 7s-1.500 7-4 7-4-3-4-7 1.500-7 4-7z" fill="#dc1a2d" fill-rule="evenodd"/>',
  '<circle cx="10" cy="10" r="10.500" fill="#dd4b3e"/><path d="M1 4.500A10.500 10.500 0 0010 20.500l4.500-8z" fill="#1fa15d"/><path d="M10 20.500A10.500 10.500 0 0019.200 5H10l4.500 7.500z" fill="#ffce43"/><circle cx="10" cy="10" r="5" fill="#fff"/><circle cx="10" cy="10" r="4" fill="#4a86ec"/>',
]
const apps = [
  { t: '热力图功能...', w: 120, g: 5, on: true, i: '<g stroke-width="0"><path d="M10 10L3 2A10.600 10.600 0 0110-.6z" fill="#30b8ee"/><path d="M10 10V-.6a10.600 10.600 0 019 5.200z" fill="#a04ee8"/><path d="M10 10l9-5.400a10.600 10.600 0 010 11z" fill="#f32e62"/><path d="M10 10l9 5.600a10.600 10.600 0 01-8 5z" fill="#ff8b1f"/><path d="M10 10l1 10.600A10.600 10.600 0 012 17z" fill="#ffd91e"/><path d="M10 10l-8 7a10.600 10.600 0 01-2.600-8z" fill="#4cc43d"/><path d="M10 10L-.6 9A10.600 10.600 0 013 2z" fill="#4f79e8"/><circle cx="10" cy="10" r="2" fill="#fff"/></g>' },
  { t: 'pythonLCD...', w: 113, g: 8, i: '<path d="M0 4l8-5 11 3 2 9-3 10-9-1-9-3z" fill="#2edb92"/><path d="M13 1l7 4v13l-8 3-10-1z" fill="#e9ef3a"/><rect x="3" y="3" width="14" height="14" fill="#000"/><text x="10" y="11" font-size="8" font-weight="700" text-anchor="middle" fill="#fff">PC</text><path d="M5 14.500h5" stroke="#fff" stroke-width="1.300"/>' },
  { t: 'music163-s...', w: 113, g: 8, i: 'f' }, { t: 'HeatMap', w: 113, g: 8, i: 'f' }, { t: 'HeatMap', w: 113, g: 8, i: 'f' }, { t: 'node-v10.1...', w: 113, g: 8, i: 'f' },
  { t: 'JSON View...', w: 113, g: 8, i: '<rect x="-1" y="-1" width="22" height="22" fill="#9bd322" stroke="#fff"/><path d="M9 3h5.500v9.500c0 5-7 6-8.500 2" fill="none" stroke="#17330b" stroke-width="3"/>' },
  { t: 'Windows P...', w: 113, g: 0, i: '<path d="M3 1.500h18L17.500 19H-.5z" fill="#3c6cd0"/><path d="M6 4.500l6 5.500-8 6M10.500 15.500h5" fill="none" stroke="#fff" stroke-width="1.900"/>' },
]
const folderIcon = '<path d="M3 0h9l2 2v18H3z" fill="#f0cf72"/><path d="M5 2h8v17l-8 1z" fill="#fbe6a4"/><path d="M12 12h3v8h-3z" fill="#e0b250"/>'
const sogou = '<path d="M1 2.500L17 0l2 16L3 18.500z" fill="#e8481c"/><path d="M14.500 5.500C11 4 6 4.500 6 7s7.500 2 7.500 4.800S8 14.800 5 13" fill="none" stroke="#fff" stroke-width="2.700"/>'
const tools = [
  '<path d="M14.500 1.500c-3 0-5.500 1.500-7.500 5L3 7 1.500 9.500 5 10l1.500 2 .5 3 2.500-2 .5-3.500c3-2 4.500-5 4.500-8zM2 13.500L5 11M1.500 1.500l2 2 4-1.500M3.500 14.500L6 12.500" fill="none" stroke="#666" stroke-width="1.100"/><circle cx="11" cy="5" r="1.200" fill="none" stroke="#666"/>',
  '<circle cx="8.500" cy="8" r="6" fill="none" stroke="#666" stroke-width="1.100"/><path d="M1 14.500C2 9 7 3 14 1.500M6 9h6M9 6v6M1 14.500c2 1 5-1 6-2" fill="none" stroke="#666" stroke-width="1.100"/>',
  '<path d="M1.500 4h13M5.500 4V2h5v2M3 4v11h10V4M6.500 7v5M9.500 7v5" fill="none" stroke="#666" stroke-width="1.200"/>',
  '<path d="M1 6v4h3l4 4V2L4 6zM10.500 5.500c1 1.500 1 3.500 0 5M13 3.500c2 2.500 2 6.500 0 9" fill="none" stroke="#666" stroke-width="1.200"/>',
  '<path d="M5 2h9v9H5zM2 5v9.500h9.500" fill="none" stroke="#666" stroke-width="1.200"/>',
]
</script>

<template>
  <div class="screen">
    <header class="tabbar">
      <div v-for="(t, i) in tabs" :key="i" class="tab" :class="{ on: t.on }">
        <svg v-if="t.on" class="shape" viewBox="0 0 216 27"><path d="M0 27C7 26 9 21 12 13 15 4 18 1 24 1h165c7 0 9 4 12 12 4 9 5 13 15 14z" fill="#fcfcfc" /></svg>
        <svg class="ico" viewBox="0 0 16 16" v-html="ico[t.icon]" />
        <span class="title">{{ t.text }}</span>
        <svg class="x" viewBox="0 0 10 10"><path d="M1.500 1.500l7 7M8.500 1.500l-7 7" stroke="currentColor" stroke-width="1.300" /></svg>
      </div>
      <svg class="plus" viewBox="0 0 12 12"><path d="M6 0v12M0 6h12" stroke="#fff" stroke-width="1.500" /></svg>
      <div class="winctl">
        <svg width="14" height="12" viewBox="0 0 14 12"><path d="M4 0q3 2 6 0l4 2.500-2 3-1.500-1V12h-7V4.500l-1.500 1-2-3z" fill="#fff" /></svg>
        <svg width="13" height="12" viewBox="0 0 13 12"><path d="M0 6.500h13" stroke="#fff" /></svg>
        <svg width="12" height="12" viewBox="0 0 12 12"><path d="M.5 3.500h9v7h-9zM.5 5h9M2.500 3V1h9v8H10" fill="none" stroke="#fff" /></svg>
        <svg width="11" height="12" viewBox="0 0 11 12"><path d="M1 1l9 10M10 1L1 11" stroke="#fff" stroke-width="1.200" /></svg>
      </div>
    </header>

    <div class="toolbar">
      <div class="nav"><svg v-for="(n, i) in nav" :key="i" viewBox="0 0 20 20" v-html="n" /></div>
      <div class="address">
        <svg width="14" height="18" viewBox="0 0 14 18"><path d="M7 1c2 1.500 4 2 6 2v6c0 4-3 6-6 8-3-2-6-4-6-8V3c2 0 4-.5 6-2zM7 5.500v6M4 8.500h6" fill="none" stroke="#888" stroke-width="1.100" /></svg>
        <p class="url"><b>192.168.0.10</b>:8080/music163.html</p>
        <svg class="q" width="14" height="14" viewBox="0 0 14 14"><path d="M1 1.500h5v4H1zM8 1.500h5v4H8zM1 8.500h5v4H1zM8.500 8v5M10.700 8v5M13 8v5" fill="none" stroke="#999" /></svg>
        <svg class="bolt" width="9" height="14" viewBox="0 0 9 14"><path d="M4 0h4L6 5h3L2 14l2-6.500H1z" fill="#999" /></svg>
        <svg class="fav" width="17" height="17" viewBox="0 0 20 20"><path d="M10 2l2.400 5.300 5.700.6-4.300 3.900 1.200 5.700-5-2.900-5 2.900 1.200-5.700L1.900 7.900l5.700-.6z" fill="none" stroke="#999" stroke-width="1.700" /></svg>
        <svg class="drop" width="22" height="27" viewBox="0 0 22 27"><path d="M.5 0v27M21.500 0v27" stroke="#ececec" /><path d="M5 11l6 6 6-6" fill="none" stroke="#999" stroke-width="1.400" /></svg>
      </div>
      <div class="search">
        <svg width="16" height="16" viewBox="0 0 16 16"><rect x=".5" y=".5" width="15" height="15" fill="#fff" stroke="#1616d8" /><g fill="#1616d8"><ellipse cx="6" cy="4" rx="1.300" ry="1.800" /><ellipse cx="10" cy="4" rx="1.300" ry="1.800" /><ellipse cx="3.500" cy="7" rx="1.200" ry="1.600" /><ellipse cx="12.500" cy="7" rx="1.200" ry="1.600" /><path d="M8 7c2 0 4 3 4 4.800 0 2-2 2-4 1.700-2 .3-4 .3-4-1.700C4 10 6 7 8 7z" /></g></svg>
        <span>http://api.map.baidu.com/api?v=2.0</span>
        <svg class="mag" width="13" height="13" viewBox="0 0 13 13"><circle cx="5.500" cy="5.500" r="4" fill="none" stroke="#aaa" stroke-width="1.300" /><path d="M8.500 8.500l3.500 3.500" stroke="#aaa" stroke-width="1.500" /></svg>
      </div>
      <div class="exts">
        <span v-for="(e, i) in exts" :key="i"><svg viewBox="0 0 20 20" v-html="e" /><i v-if="i === 8">99+</i></span>
      </div>
      <svg class="dl" width="14" height="16" viewBox="0 0 14 16"><path d="M7 1v12M2 8.500l5 5 5-5" fill="none" stroke="#555" stroke-width="1.900" /></svg>
      <svg class="menu" width="14" height="14" viewBox="0 0 14 14"><path d="M0 2h14M0 7h14M0 12h14" stroke="#555" stroke-width="2" /></svg>
    </div>

    <nav class="marks">
      <span v-for="(m, i) in marks" :key="i" class="mark" :style="{ width: m[2] + 'px' }"><svg viewBox="0 0 16 16" v-html="ico[m[0]]" />{{ m[1] }}</span>
      <b class="more">»</b>
      <span class="mark rest"><svg viewBox="0 0 16 16" v-html="ico.folder" />其它收藏</span>
    </nav>

    <svg class="logo" viewBox="0 0 48 49">
      <defs><linearGradient id="lg" x1="0" y1="0" x2="0" y2="1"><stop offset="0" stop-color="#f2ed45" /><stop offset=".5" stop-color="#cfca2e" /><stop offset="1" stop-color="#e6e02f" /></linearGradient></defs>
      <rect width="48" height="49" fill="#161616" /><path d="M3 1h33l11 14v29l-3 4H4l-3-3V4z" fill="url(#lg)" stroke="#f6f4a8" stroke-width=".8" /><path d="M35 1h12v14z" fill="#444" />
      <path d="M9 16h4v16h11v4H9z" fill="#151500" /><path d="M41 27c-2-4-6-5-9-4-6 2-8 8-7 13 1 6 8 9 14 3" fill="none" stroke="#222006" stroke-width="2" />
    </svg>

    <main class="page">
      <p class="note">//这样也可以:</p>
      <section class="mapbox">
        <svg class="map" viewBox="0 115 1920 500">
          <defs>
            <radialGradient id="spot"><stop v-for="s in falloff" :key="s.o" :offset="s.o" stop-color="#000" :stop-opacity="s.v" /></radialGradient>
            <radialGradient id="mist"><stop offset="0" stop-color="#7a6fd8" stop-opacity=".2" /><stop offset=".5" stop-color="#7a6fd8" stop-opacity=".09" /><stop offset="1" stop-color="#7a6fd8" stop-opacity="0" /></radialGradient>
            <filter id="ramp" filterUnits="userSpaceOnUse" x="700" y="115" width="600" height="500" color-interpolation-filters="sRGB">
              <feColorMatrix values="0 0 0 1 0  0 0 0 1 0  0 0 0 1 0  0 0 0 1 0" />
              <feComponentTransfer>
                <feFuncR type="table" tableValues=".45 .35 .2 .1 .35 .75 1 1 1 1 1 .95 .95 .95 .95 .95 .95 .95 .95 .93 .88" />
                <feFuncG type="table" tableValues=".4 .38 .9 1 1 1 1 .8 .62 .48 .34 .27 .27 .27 .27 .27 .27 .27 .27 .25 .2" />
                <feFuncB type="table" tableValues=".9 .95 .8 .15 0 0 0 0 .1 .12 .14 .18 .18 .18 .18 .18 .18 .18 .18 .16 .12" />
                <feFuncA type="table" tableValues="0 .6 .95 .97 1 1 1 1 1 1 1 1 1 1 1 1 1 1 1 1 1" />
              </feComponentTransfer>
            </filter>
          </defs>
          <rect y="115" width="1920" height="500" fill="#f5f5f5" />
          <path v-for="(l, i) in drawn" :key="i" :class="l.kind" :transform="l.t" :d="l.d" />
          <path d="M1382 476l6-17" stroke="#9a9a9a" stroke-width="2" />
          <circle v-for="(h, i) in haze" :key="'z' + i" :cx="h[0]" :cy="h[1]" :r="h[2]" :opacity="h[3]" fill="url(#mist)" />
          <g v-for="l in labels" :key="l[0]">
            <template v-if="l[4] && l[3] === 'cn'"><circle :cx="l[4]" :cy="l[5]" r="2.900" fill="#f0a79c" stroke="#cf4a3c" stroke-width="1" /><circle :cx="l[4]" :cy="l[5]" r="1.200" fill="#c8301f" /></template>
            <circle v-else-if="l[4]" :cx="l[4]" :cy="l[5]" r="2.900" fill="#c4702b" stroke="#8d4c17" stroke-width=".6" />
          </g>
          <g v-for="(s, i) in seats" :key="'s' + i"><circle :cx="s[0]" :cy="s[1]" r="4.400" fill="#fff7e8" stroke="#b06a2a" /><circle :cx="s[0]" :cy="s[1]" r="2.700" fill="#b5642a" /></g>
          <path d="M1038 272.500l1.700 4.200 4.500.2-3.500 2.800 1.200 4.400-3.900-2.500-3.900 2.500 1.200-4.400-3.500-2.800 4.500-.2z" fill="#d8403a" />
          <text v-for="l in labels" :key="'t' + l[0]" :class="l[3]" :x="l[1]" :y="l[2]" dy=".36em">{{ l[0] }}</text>
          <g filter="url(#ramp)"><circle v-for="(h, i) in heat" :key="'h' + i" :cx="h[0]" :cy="h[1]" r="28" fill="url(#spot)" /></g>
          <path d="M1219 201v-5h8v4m3 2v-5h10v8m-19-2v5m5-8v6m4-4v5m5-6v4M1168 561v-5h8v4m3 2v-5h8v8m-15-2v5m5-8v6M1044 466l8 5 7 8 9 2" fill="none" stroke="#5b2a20" stroke-width=".6" opacity=".7" />
        </svg>
        <svg class="bdlogo" viewBox="0 0 74 32">
          <g stroke="#fff" stroke-width="3" paint-order="stroke" stroke-linejoin="round">
            <text x="1" y="25.500" font-size="17" font-weight="700" fill="#d8201c" textLength="25" lengthAdjust="spacingAndGlyphs">Bai</text>
            <g fill="#2424cf"><ellipse cx="32.500" cy="7" rx="2.700" ry="3.800" /><ellipse cx="39.500" cy="7" rx="2.700" ry="3.800" /><ellipse cx="28" cy="13" rx="2.500" ry="3.300" /><ellipse cx="44.500" cy="13" rx="2.500" ry="3.300" /><path d="M36 12c4 0 5 4 8 7 3 4 1 8-3 8-3 0-7 0-10 0-4 0-6-4-3-8 3-3 4-7 8-7z" /></g>
            <text x="48" y="24" font-size="12" font-weight="900" fill="#d8201c" textLength="24" lengthAdjust="spacingAndGlyphs">地图</text>
          </g>
          <text x="36" y="25" font-size="10" font-weight="700" text-anchor="middle" fill="#fff">du</text>
        </svg>
        <p class="credit">© 2019 Baidu - GS(2018)5572号 - 甲测资字1100930 - 京ICP证030173号 - Data © 长地万方 &amp; <a>OpenStreetMap</a> &amp; <a>HERE</a></p>
      </section>
      <div class="btns"><button class="focus">显示热力图</button><button>关闭热力图</button></div>
    </main>

    <div class="meter"><i /></div>
    <footer class="status">
      <svg v-for="(t, i) in tools" :key="i" viewBox="0 0 16 16" v-html="t" />
      <svg class="last" viewBox="0 0 16 16"><circle cx="7" cy="7" r="4.500" fill="none" stroke="#666" stroke-width="1.100" /><path d="M10.500 10.500l4 4" stroke="#666" stroke-width="1.200" /></svg>
    </footer>

    <div class="taskbar">
      <div class="sys"><svg width="16" height="16" viewBox="0 0 16 16"><path d="M0 2.300l6.500-.9v6.100H0zM7.300 1.200L16 0v7.500H7.300zM0 8.300h6.500v6.100L0 13.500zM7.300 8.300H16V16l-8.700-1.200z" fill="#fff" /></svg></div>
      <div class="sys"><svg width="16" height="16" viewBox="0 0 16 16"><circle cx="8" cy="8" r="6.700" fill="none" stroke="#fff" stroke-width="1.900" /></svg></div>
      <div class="sys wide"><svg width="18" height="16" viewBox="0 0 18 16"><path d="M2 4.500h9v7H2zM1.500 1v1.500h10V1M1.500 15v-1.500h10V15M15.500 1v14M14.500 5h2v2h-2z" fill="none" stroke="#fff" stroke-width="1.200" /></svg></div>
      <div class="app cmd"><svg width="22" height="18" viewBox="0 0 22 18"><rect x=".5" y=".5" width="21" height="17" fill="#050505" stroke="#8f979c" /><rect x="1" y="1" width="20" height="1.500" fill="#ccc" /><text x="2.500" y="9.500" font-size="6" fill="#eee">C:\_</text></svg>命令提示符</div>
      <div class="quick"><span v-for="(q, i) in quick" :key="i"><svg viewBox="-1 -1 22 22" v-html="q" /></span></div>
      <div v-for="(a, i) in apps" :key="i" class="app" :class="{ on: a.on }" :style="{ width: a.w + 'px', marginRight: a.g + 'px' }"><svg viewBox="-1 -1 23 23" v-html="a.i === 'f' ? folderIcon : a.i" />{{ a.t }}</div>
      <div class="tray">
        <span class="ch">CH</span>
        <svg style="margin-left:3px" width="16" height="16" viewBox="0 0 20 19" v-html="sogou" />
        <svg style="margin-left:44px" width="16" height="16" viewBox="0 0 16 16"><g fill="none" stroke="#fff" stroke-width="1.100"><circle cx="5" cy="7.500" r="2.500" /><path d="M.8 15c0-3 2-4.500 4.200-4.500S9 12 9 15" /><circle cx="11" cy="3.500" r="2.500" /><path d="M9 7.500c3-2 6.300-.500 6.300 3" /></g></svg>
        <svg style="margin-left:23px" width="13" height="9" viewBox="0 0 13 9"><path d="M1 8l5.500-6L12 8" fill="none" stroke="#fff" stroke-width="1.300" /></svg>
        <svg style="margin-left:9px" width="17" height="17" viewBox="0 0 17 17"><rect width="14" height="14" fill="#1596ea" /><path d="M7 2v10M3 4.500l8 5M11 4.500l-8 5" stroke="#fff" stroke-width="1.700" /><circle cx="12.500" cy="12.500" r="4" fill="#f08c36" /><path d="M10.500 11.700h4M10.500 13.500h4" stroke="#fff" /></svg>
        <svg style="margin-left:7px" width="16" height="16" viewBox="0 0 20 20" v-html="exts[9]" />
        <svg style="margin-left:8px" width="17" height="16" viewBox="0 0 17 16"><path d="M4 3.500h12v8H4zM10 11.500v3M6.500 14.500h7" fill="none" stroke="#fff" stroke-width="1.100" /><path d="M1 1.500h4v4H1zM3 5.500v6" fill="#1b2e3b" stroke="#fff" stroke-width="1" /></svg>
        <span class="zh">中</span>
        <svg style="margin-left:13px" width="16" height="16" viewBox="0 0 20 19" v-html="sogou" />
        <span class="clock">14:35<br />2019/1/22</span>
        <svg class="note-ico" width="28" height="26" viewBox="0 0 28 26"><path d="M1 1h16v13H9l-4 4v-4H1z" fill="#fff" /><path d="M4 4.500h10M4 7.500h10M4 10.500h7" stroke="#1b2e3b" /><circle cx="16" cy="16" r="7.500" fill="#343f48" stroke="#8b949a" /><text x="16" y="20" font-size="11" font-weight="700" text-anchor="middle" fill="#fff">8</text></svg>
      </div>
    </div>
  </div>
</template>

<style>
html, body { margin: 0; background: #fff; overflow: hidden; }
</style>

<style scoped>
.screen { position: relative; width: 1920px; height: 1080px; display: flex; flex-direction: column; overflow: hidden; background: #fff; font: 12px "Open Sans", "Noto Sans CJK SC", sans-serif; color: #333; }
.screen p { margin: 0; }
.tabbar { flex: none; height: 27px; box-sizing: border-box; padding-left: 82px; background: #62a6f4; display: flex; align-items: center; }
.tab { position: relative; width: 195px; height: 27px; box-sizing: border-box; display: flex; align-items: center; padding: 3px 14px 0 13px; color: #4a6c95; border-right: 1px solid transparent; }
.tab:nth-child(-n+4) { border-right-color: #5794d9; }
.tab.on { color: #222; }
.shape { position: absolute; left: -11px; top: 0; width: 216px; height: 27px; }
.ico { position: relative; flex: none; width: 16px; height: 16px; margin-right: 6px; }
.tab .title { position: relative; flex: 1; min-width: 0; overflow: hidden; white-space: nowrap; line-height: 20px; }
.tab:not(.on) .title { mask-image: linear-gradient(90deg, #000 88%, transparent 100%); }
.tab .x { position: relative; flex: none; width: 10px; height: 10px; margin-left: 8px; color: #3f4c5c; }
.plus { width: 12px; height: 12px; margin-left: 24px; }
.winctl { margin-left: auto; margin-right: 15px; display: flex; align-items: center; gap: 12px; padding-top: 3px; }
.toolbar { flex: none; height: 36px; background: #fcfcfc; display: flex; align-items: center; padding: 3px 0 0; box-sizing: border-box; }
.nav { display: flex; gap: 13px; padding-left: 72px; margin-right: 3px; }
.nav svg { width: 20px; height: 20px; }
.address { width: 948px; height: 27px; margin-top: 4px; background: #f5f5f5; display: flex; align-items: center; box-sizing: border-box; padding: 0 0 3px 8px; }
.address .drop { margin-bottom: -3px; }
.url { flex: 1; margin-left: 9px !important; font-size: 15px; letter-spacing: .28px; color: #777; line-height: 22px; }
.url b { font-weight: 400; color: #000; }
.q { margin-right: 14px; } .bolt { margin-right: 15px; } .fav { margin-right: 8px; }
.search { width: 300px; height: 27px; margin-top: 4px; background: #f5f5f5; display: flex; align-items: center; box-sizing: border-box; padding: 0 0 3px 13px; }
.search span { width: 234px; margin-left: 4px; overflow: hidden; white-space: nowrap; font-size: 14.500px; letter-spacing: -.18px; color: #000; line-height: 22px; mask-image: linear-gradient(90deg, #000 97%, transparent); }
.mag { margin-left: 12px; margin-top: 2px; }
.exts { display: flex; margin-left: 3px; }
.exts span { position: relative; width: 32.900px; display: flex; justify-content: center; }
.exts svg { width: 19px; height: 19px; }
.exts i { position: absolute; left: 5px; top: 14px; width: 24px; height: 10px; background: #e60012; color: #fff; font: 10px/10px "Open Sans", sans-serif; text-align: center; }
.dl { margin-left: 14px; } .menu { margin-left: 17px; }
.marks { flex: none; height: 31px; box-sizing: border-box; background: #fcfcfc; border-bottom: 1px solid #cdcdcd; display: flex; align-items: center; padding-left: 10px; }
.mark { flex: none; display: flex; align-items: center; white-space: nowrap; color: #444; line-height: 20px; }
.mark svg { flex: none; width: 16px; height: 16px; margin-right: 2px; }
.more { font-size: 15px; line-height: 16px; color: #444; width: 10px; margin-right: 10px; margin-left: 4px; padding-bottom: 3px; }
.rest svg { margin-right: 7px; }
.logo { position: absolute; left: 6px; top: 7px; width: 48px; height: 48px; box-shadow: 0 0 2px 1px #dfe9f5; }
.page { flex: 1; background: #fff; color: #000; }
.note { height: 21px; font: 16px/24px "Liberation Sans", "Noto Sans CJK SC", sans-serif; letter-spacing: .5px; }
.mapbox { position: relative; height: 500px; overflow: hidden; }
.map { display: block; width: 1920px; height: 500px; }
.map path { vector-effect: non-scaling-stroke; stroke-linejoin: round; }
.sea { fill: #bddbf9; stroke: #fdf6e6; stroke-width: 1; }
.land { fill: #f5f5f5; } .warm { fill: #f6f4f0; stroke: #fdf6e4; stroke-width: 1; }
.green { fill: #d9ecd5; } .lake { fill: #b3d2fb; }
.river, .road, .province, .nation, .dash { fill: none; }
.river { stroke: #bdd8fb; stroke-width: 1.700; }
.road { stroke: #fcda88; stroke-width: 1.250; }
.province { stroke: #6c6d72; stroke-width: .95; }
.nation { stroke: #b3a467; stroke-width: 2; }
.dash { stroke: #e79b9b; stroke-dasharray: 3 2; }
text.cn, text.for, text.capital, text.state, text.water { text-anchor: middle; font-family: "Noto Sans CJK SC", sans-serif; font-size: 11.700px; fill: #26262e; stroke: #fff; stroke-width: 2px; paint-order: stroke; stroke-linejoin: round; }
text.for { font-size: 9.900px; fill: #44444a; }
text.capital { font-size: 14.500px; } text.state { font-size: 14.500px; fill: #3a3a44; }
text.water { font-size: 10.800px; fill: #4f7cb6; stroke-width: 1.500px; }
.bdlogo { position: absolute; left: 3px; top: 449px; width: 74px; height: 32px; font-family: "Liberation Sans", "Noto Sans CJK SC", sans-serif; }
.credit { position: absolute; left: 0; bottom: 0; height: 18px; padding: 0 1px 0 3px; background: rgba(255,255,255,.5); font: 12px/16px "Liberation Sans", "Noto Sans CJK SC", sans-serif; white-space: nowrap; color: #111; }
.credit a { color: #7070cc; text-decoration: underline; }
.btns { display: flex; }
.btns button { width: 82px; height: 23px; padding: 0; border: 1px solid #a0a0a0; background: linear-gradient(#f2f2f2, #dcdcdc); font: 13.300px/21px "Liberation Sans", "Noto Sans CJK SC", sans-serif; color: #000; }
.btns .focus { width: 83px; border-color: #6f9bd0; }
.meter { position: absolute; left: 1910px; top: 975px; width: 12px; height: 59px; background: #545a68; border-radius: 4px 0 0 3px; z-index: 2; border: 1px solid #3a3d48; box-sizing: border-box; }
.meter i { display: block; margin: 6px 0 0 3px; width: 4px; height: 46px; background: repeating-linear-gradient(transparent 0 1px, #545a68 1px 2px), linear-gradient(#2a2d36 0 30%, #f0e85e 30%, #8fe890 70%, #6ae0b8); }
.status { flex: none; height: 25px; box-sizing: border-box; border-top: 1px solid #cfcfcf; background: #fbfbfb; display: flex; align-items: center; padding-left: 1714px; gap: 20px; }
.status svg { flex: none; width: 16px; height: 16px; margin-top: -1px; }
.taskbar { flex: none; height: 40px; background: #1b2e3b; display: flex; align-items: center; color: #fff; }
.sys { width: 48px; display: flex; justify-content: center; }
.sys.wide { width: 46px; padding-right: 9px; }
.app { flex: none; height: 40px; box-sizing: border-box; display: flex; align-items: center; border-bottom: 2px solid #78b0e2; white-space: nowrap; padding-left: 3px; }
.app svg { flex: none; width: 23px; height: 23px; margin-right: 6px; margin-left: 1px; }
.app.on { background: #4a5a65; }
.app.on svg { margin-left: 5px; margin-right: 5px; }
.app.cmd { width: 113px; }
.app.cmd svg { width: 22px; height: 18px; margin-right: 6px; }
.quick { display: flex; width: 281px; padding-left: 5px; box-sizing: border-box; }
.quick span { width: 45.800px; display: flex; justify-content: center; }
.quick svg { width: 23px; height: 23px; }
.tray { flex: 1; display: flex; align-items: center; padding-left: 17px; }
.tray svg { flex: none; }
.ch { font: 11px "Liberation Mono", monospace; width: 18px; }
.zh { font-size: 13px; margin-left: 8px; width: 14px; }
.clock { width: 80px; margin-left: 7px; text-align: center; line-height: 19px; }
.note-ico { margin-left: 6px; margin-top: 4px; }
</style>
